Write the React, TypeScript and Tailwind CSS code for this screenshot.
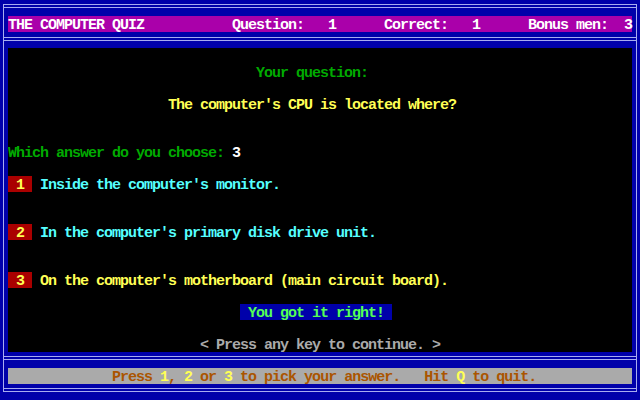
const line = "bg-[#a8acf0]";

function DoubleRule() {
    return (
        <div className="flex flex-col gap-[2px]">
            <div className={`h-px ${line}`}></div>
            <div className={`h-px ${line}`}></div>
        </div>
    );
}

// one 16px text row of the 80x25 screen; text sits a little lower, like the VGA font
function Row({ indent = 0, children }: { indent?: number; children?: React.ReactNode }) {
    return (
        <div className="h-[16px] flex items-start [&>span]:h-[16px] [&>span]:pt-[2px]">
            <span style={{ width: indent * 8 }}></span>
            {children}
        </div>
    );
}

const answers = [
    { n: "1", text: "Inside the computer's monitor.", color: "text-[#55ffff]" },
    { n: "2", text: "In the computer's primary disk drive unit.", color: "text-[#55ffff]" },
    { n: "3", text: "On the computer's motherboard (main circuit board).", color: "text-[#ffff55]" },
];

export default function App() {
    return (
        <div className="w-[640px] h-[400px] bg-[#0000aa] pt-[4px] px-[3px] font-['Liberation_Mono',monospace] font-bold text-[15px] leading-[16px] tracking-[-1px] whitespace-pre">
            <div className="h-[388px] border-x border-[#a8acf0] flex flex-col">
                <DoubleRule />
                <div className="h-[8px]"></div>
                <div className="mx-[4px] h-[16px] pt-[2px] bg-[#aa00aa] text-white">
                    {"THE COMPUTER QUIZ           Question:   1      Correct:   1      Bonus men:  3"}
                </div>
                <div className="h-[5px]"></div>
                <DoubleRule />
                <div className="h-[7px]"></div>

                <div className="mx-[4px] h-[304px] bg-black flex flex-col">
                    <Row />
                    <Row indent={31}><span className="text-[#00aa00]">Your question:</span></Row>
                    <Row />
                    <Row indent={20}><span className="text-[#ffff55]">The computer's CPU is located where?</span></Row>
                    <Row />
                    <Row />
                    <Row>
                        <span className="text-[#00aa00]">Which answer do you choose: </span>
                        <span className="text-white">3</span>
                    </Row>
                    {answers.map(({ n, text, color }, i) => (
                        <div key={n} className="flex flex-col">
                            <Row />
                            <Row>
                                <span className="bg-[#aa0000] text-[#ffff55]">{` ${n} `}</span>
                                <span className={color}>{` ${text}`}</span>
                            </Row>
                            {i < 2 && <Row />}
                        </div>
                    ))}
                    <Row />
                    <Row indent={29}><span className="bg-[#0000aa] text-[#55ff55]">{" You got it right! "}</span></Row>
                    <Row />
                    <Row indent={24}><span className="text-[#aaaaaa]">{"< Press any key to continue. >"}</span></Row>
                </div>

                <div className="h-[4px]"></div>
                <DoubleRule />
                <div className="h-[8px]"></div>
                <div className="mx-[4px] h-[16px] pt-[2px] bg-[#aaaaaa] text-[#aa5500]">
                    {"             Press "}
                    <span className="text-[#ffff55]">1</span>
                    {", "}
                    <span className="text-[#ffff55]">2</span>
                    {" or "}
                    <span className="text-[#ffff55]">3</span>
                    {" to pick your answer.   Hit "}
                    <span className="text-[#ffff55]">Q</span>
                    {" to quit."}
                </div>
                <div className="h-[4px]"></div>
                <DoubleRule />
            </div>
        </div>
    );
}
